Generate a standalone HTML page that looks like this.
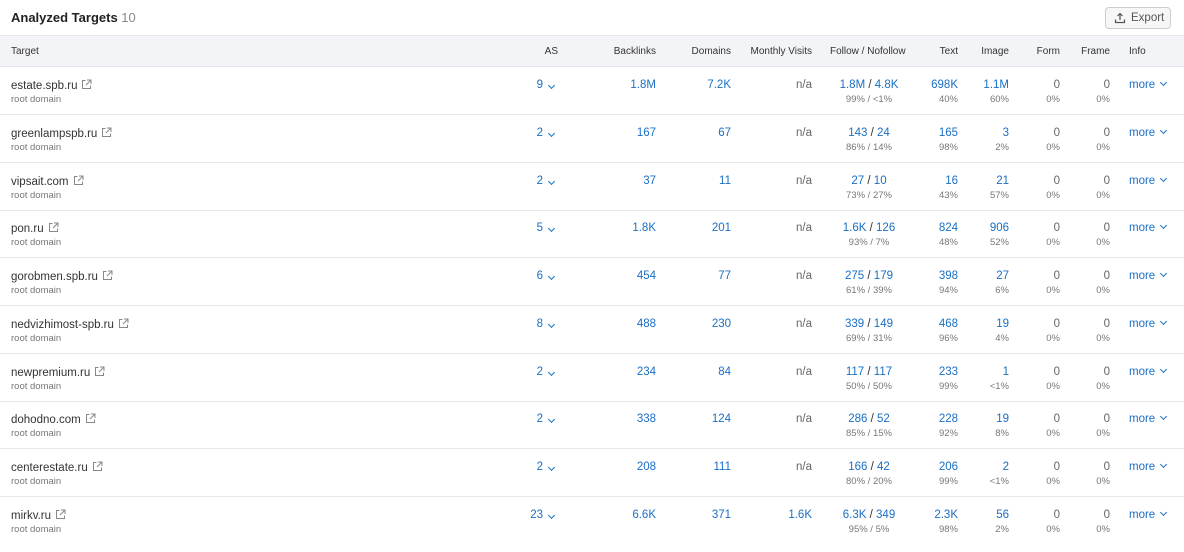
<!DOCTYPE html>
<html><head><meta charset="utf-8"><style>
body{margin:0;width:1184px;height:552px;background:#fff;font-family:"Liberation Sans",Arial,sans-serif;overflow:hidden;position:relative}
.t{position:absolute;left:11px;top:10px;font-size:13px;font-weight:bold;color:#222}
.t span{font-weight:normal;color:#888}
.exp{position:absolute;left:1105px;top:7px;width:66px;height:22px;border:1px solid #ccc;border-radius:4px;background:#f7f7f8;font-size:11.5px;color:#555;box-sizing:border-box;line-height:21px;padding-left:25px}
.exp svg{position:absolute;left:8px;top:4px}
.hd{position:absolute;left:0;top:35px;width:1184px;height:32px;background:#f3f4f8;border-top:1px solid #e6e7ec;border-bottom:1px solid #e3e4e9;box-sizing:border-box;font-size:10px;color:#333}
.hd div,.r div{position:absolute;white-space:nowrap}
.r{position:absolute;left:0;width:1184px;height:48px;border-bottom:1px solid #e6e7ec;box-sizing:border-box;font-size:11.5px;color:#333}
.b{color:#1a6fc4}
.s{font-size:9.5px;color:#777}
.rt{text-align:right}
.c{text-align:center}
.g{color:#666}
.chev{display:inline-block;width:4px;height:4px;border-right:1.5px solid #1a6fc4;border-bottom:1.5px solid #1a6fc4;transform:rotate(45deg);margin-left:6px;position:relative;top:-3px}
.ext{display:inline-block;margin-left:4px;vertical-align:-1px}
</style></head><body>
<div class="t">Analyzed Targets <span>10</span></div>
<div class="exp"><svg width="12" height="12" viewBox="0 0 12 12" fill="none" stroke="#555" stroke-width="1.2"><path d="M6 8V1.5M3.5 4L6 1.5 8.5 4M1.5 7.5v3h9v-3"/></svg>Export</div>
<div class="hd">
<div style="left:11px;top:10px">Target</div>
<div style="right:626px;top:10px">AS</div>
<div style="right:528px;top:10px">Backlinks</div>
<div style="right:453px;top:10px">Domains</div>
<div style="right:372px;top:10px">Monthly Visits</div>
<div style="left:830px;top:10px">Follow / Nofollow</div>
<div style="right:226px;top:10px">Text</div>
<div style="right:175px;top:10px">Image</div>
<div style="right:124px;top:10px">Form</div>
<div style="right:74px;top:10px">Frame</div>
<div style="left:1129px;top:10px">Info</div>
</div>
<div id="rows"></div>
<script>
var d=[["estate.spb.ru","9","1.8M","7.2K","n/a","1.8M","4.8K","99% / <1%","698K","40%","1.1M","60%"],
["greenlampspb.ru","2","167","67","n/a","143","24","86% / 14%","165","98%","3","2%"],
["vipsait.com","2","37","11","n/a","27","10","73% / 27%","16","43%","21","57%"],
["pon.ru","5","1.8K","201","n/a","1.6K","126","93% / 7%","824","48%","906","52%"],
["gorobmen.spb.ru","6","454","77","n/a","275","179","61% / 39%","398","94%","27","6%"],
["nedvizhimost-spb.ru","8","488","230","n/a","339","149","69% / 31%","468","96%","19","4%"],
["newpremium.ru","2","234","84","n/a","117","117","50% / 50%","233","99%","1","<1%"],
["dohodno.com","2","338","124","n/a","286","52","85% / 15%","228","92%","19","8%"],
["centerestate.ru","2","208","111","n/a","166","42","80% / 20%","206","99%","2","<1%"],
["mirkv.ru","23","6.6K","371","1.6K","6.3K","349","95% / 5%","2.3K","98%","56","2%"]];
var ext='<svg class="ext" width="11" height="11" viewBox="0 0 11 11" fill="none" stroke="#888" stroke-width="1"><path d="M4.5 1.5H1.5v8h8V6.5M6 1h4v4M10 1L5 6"/></svg>';
var h='';
d.forEach(function(r,i){var top=67+i*47.75;
h+='<div class="r" style="top:'+top+'px;'+(i==9?'border:none':'')+'">'+
'<div style="left:11px;top:12px">'+r[0]+ext+'</div>'+
'<div class="s" style="left:11px;top:27px">root domain</div>'+
'<div class="b rt" style="right:641px;top:12px">'+r[1]+'</div><div style="left:543px;top:15px"><span class="chev"></span></div>'+
'<div class="b rt" style="right:528px;top:12px">'+r[2]+'</div>'+
'<div class="b rt" style="right:453px;top:12px">'+r[3]+'</div>'+
'<div class="rt '+(r[4]=="n/a"?'g':'b')+'" style="right:372px;top:12px">'+r[4]+'</div>'+
'<div class="c" style="left:809px;width:120px;top:12px"><span class="b">'+r[5]+'</span> / <span class="b">'+r[6]+'</span></div>'+
'<div class="c s" style="left:809px;width:120px;top:27px">'+r[7]+'</div>'+
'<div class="b rt" style="right:226px;top:12px">'+r[8]+'</div><div class="s rt" style="right:226px;top:27px">'+r[9]+'</div>'+
'<div class="b rt" style="right:175px;top:12px">'+r[10]+'</div><div class="s rt" style="right:175px;top:27px">'+r[11]+'</div>'+
'<div class="g rt" style="right:124px;top:12px">0</div><div class="s rt" style="right:124px;top:27px">0%</div>'+
'<div class="g rt" style="right:74px;top:12px">0</div><div class="s rt" style="right:74px;top:27px">0%</div>'+
'<div class="b" style="left:1129px;top:12px">more<span class="chev"></span></div></div>';});
document.getElementById('rows').innerHTML=h;
</script>
</body></html>
